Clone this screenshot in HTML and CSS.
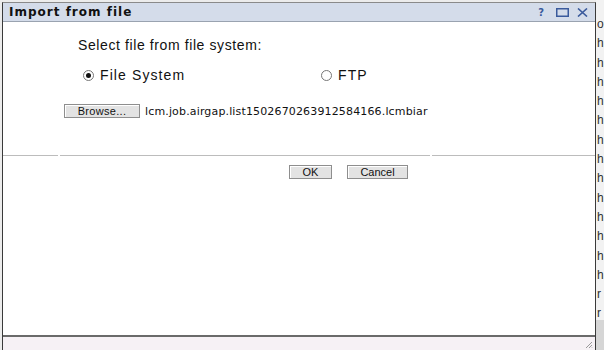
FILE: index.html
```html
<!DOCTYPE html>
<html>
<head>
<meta charset="utf-8">
<link rel="stylesheet" href="styles.css">
</head>
<body>
<div class="page">
  <div class="dialog">
    <div class="titlebar">
      <span class="title">Import from file</span>
      <span class="tools">
        <span class="help">?</span>
        <svg class="max" width="13" height="9" viewBox="0 0 13 9"><rect x="0.75" y="0.75" width="11.5" height="7.5" fill="none" stroke="#3a5a9c" stroke-width="1.5"/></svg>
        <svg class="close" width="11" height="9" viewBox="0 0 11 9"><path d="M1 0.5 L10 8.5 M10 0.5 L1 8.5" stroke="#3a5a9c" stroke-width="1.6"/></svg>
      </span>
    </div>
    <div class="content">
      <div class="prompt">Select file from file system:</div>
      <div class="radios">
        <label class="radio r1"><span class="dot on"></span>File System</label>
        <label class="radio r2"><span class="dot"></span>FTP</label>
      </div>
      <div class="browse-row">
        <button class="btn browse">Browse...</button>
        <span class="fname">lcm.job.airgap.list1502670263912584166.lcmbiar</span>
      </div>
    </div>
    <div class="sep"><span class="s1"></span><span class="s2"></span><span class="s3"></span></div>
    <div class="actions">
      <button class="btn ok">OK</button>
      <button class="btn cancel">Cancel</button>
    </div>
    <div class="spacer"></div>
    <div class="footer">
      <svg class="grip" width="8" height="8" viewBox="0 0 8 8"><path d="M7 1 L1 7 M7 4 L4 7 M7 6.5 L6.5 7" stroke="#999" stroke-width="1"/></svg>
    </div>
  </div>
  <div class="strip">
    <div class="rows">
      <div>o</div><div>h</div><div>h</div><div>h</div><div>h</div><div>h</div><div>h</div><div>h</div><div>h</div><div>h</div><div>h</div><div>h</div><div>h</div><div>h</div><div>r</div><div>r</div>
    </div>
    <div class="strip-bottom"></div>
  </div>
</div>
</body>
</html>
```
FILE: styles.css
```css
html, body { margin: 0; padding: 0; }
body { width: 604px; height: 350px; overflow: hidden; background: #ececec; font-family: "Liberation Sans", Arial, sans-serif; }
.page { display: flex; height: 350px; }
.dialog {
  margin-left: 2px; margin-top: 2px;
  width: 594px; height: 348px; flex: none;
  border-left: 1px solid #3a3a3a; border-right: 1px solid #3a3a3a; border-top: 1px solid #8a8a8a;
  background: #fff;
  display: flex; flex-direction: column;
  box-sizing: border-box;
}
.titlebar {
  height: 18px; background: #d4dcea; border-bottom: 1px solid #9aa3b0;
  display: flex; align-items: center; justify-content: space-between;
  padding: 0 6px 0 6px;
}
.title { font-family: "DejaVu Sans", Verdana, sans-serif; font-weight: bold; font-size: 12px; color: #111; letter-spacing: 1px; }
.tools { display: flex; align-items: center; gap: 0; }
.help { font-family: "DejaVu Sans", sans-serif; font-weight: bold; font-size: 10px; color: #3a5a9c; margin-right: 12px; }
.max { margin-right: 8px; }
.close { margin-right: 1px; }
.content { padding-top: 15px; }
.prompt { font-size: 14px; padding-left: 75px; color: #111; height: 16px; line-height: 16px; letter-spacing: 0.6px; }
.radios { display: flex; margin-top: 15px; height: 14px; align-items: center; font-size: 14px; color: #111; letter-spacing: 1.1px; }
.radio { display: flex; align-items: center; }
.r1 { margin-left: 80px; width: 238px; }
.dot { width: 9px; height: 9px; border: 1px solid #777; border-radius: 50%; margin-right: 6px; box-sizing: content-box; position: relative; background: #fff; }
.dot.on::after { content: ""; position: absolute; left: 2px; top: 2px; width: 5px; height: 5px; border-radius: 50%; background: #111; }
.browse-row { display: flex; align-items: center; margin-top: 22px; padding-left: 61px; }
.btn {
  font-family: "Liberation Sans", Arial, sans-serif; font-size: 11px; color: #111;
  background: #e3e3e3; border: 1px solid #8e8e8e; border-radius: 0;
  padding: 0; height: 14px; line-height: 12px; box-sizing: border-box;
  box-shadow: inset 1px 1px 0 #fff;
}
.browse { width: 76px; height: 14px; letter-spacing: 0.3px; }
.fname { font-family: "DejaVu Sans", Tahoma, sans-serif; font-size: 11px; letter-spacing: 0.15px; margin-left: 5px; color: #111; }
.sep { display: flex; margin-top: 37px; height: 1px; }
.sep span { height: 1px; background: #bcbcbc; }
.s1 { width: 55px; }
.s2 { width: 370px; margin-left: 2px; }
.s3 { flex: 1; margin-left: 2px; }
.actions { display: flex; margin-top: 9px; padding-left: 286px; }
.ok { width: 43px; }
.cancel { width: 61px; margin-left: 15px; }
.spacer { flex: 1; }
.footer { height: 13px; border-top: 2px solid #6a6a6a; background: #f6f1f5; position: relative; }
.grip { position: absolute; right: 2px; bottom: 1px; }
.strip { flex: 1; background: #f2f2f2; font-size: 12px; color: #333; overflow: hidden; display: flex; flex-direction: column; }
.rows { padding-top: 15px; height: 320px; box-sizing: border-box; overflow: hidden; }
.rows div { height: 19.3px; line-height: 19px; padding-left: 1px; }
.strip-bottom { flex: 1; background: #d6d6d6; }
```
